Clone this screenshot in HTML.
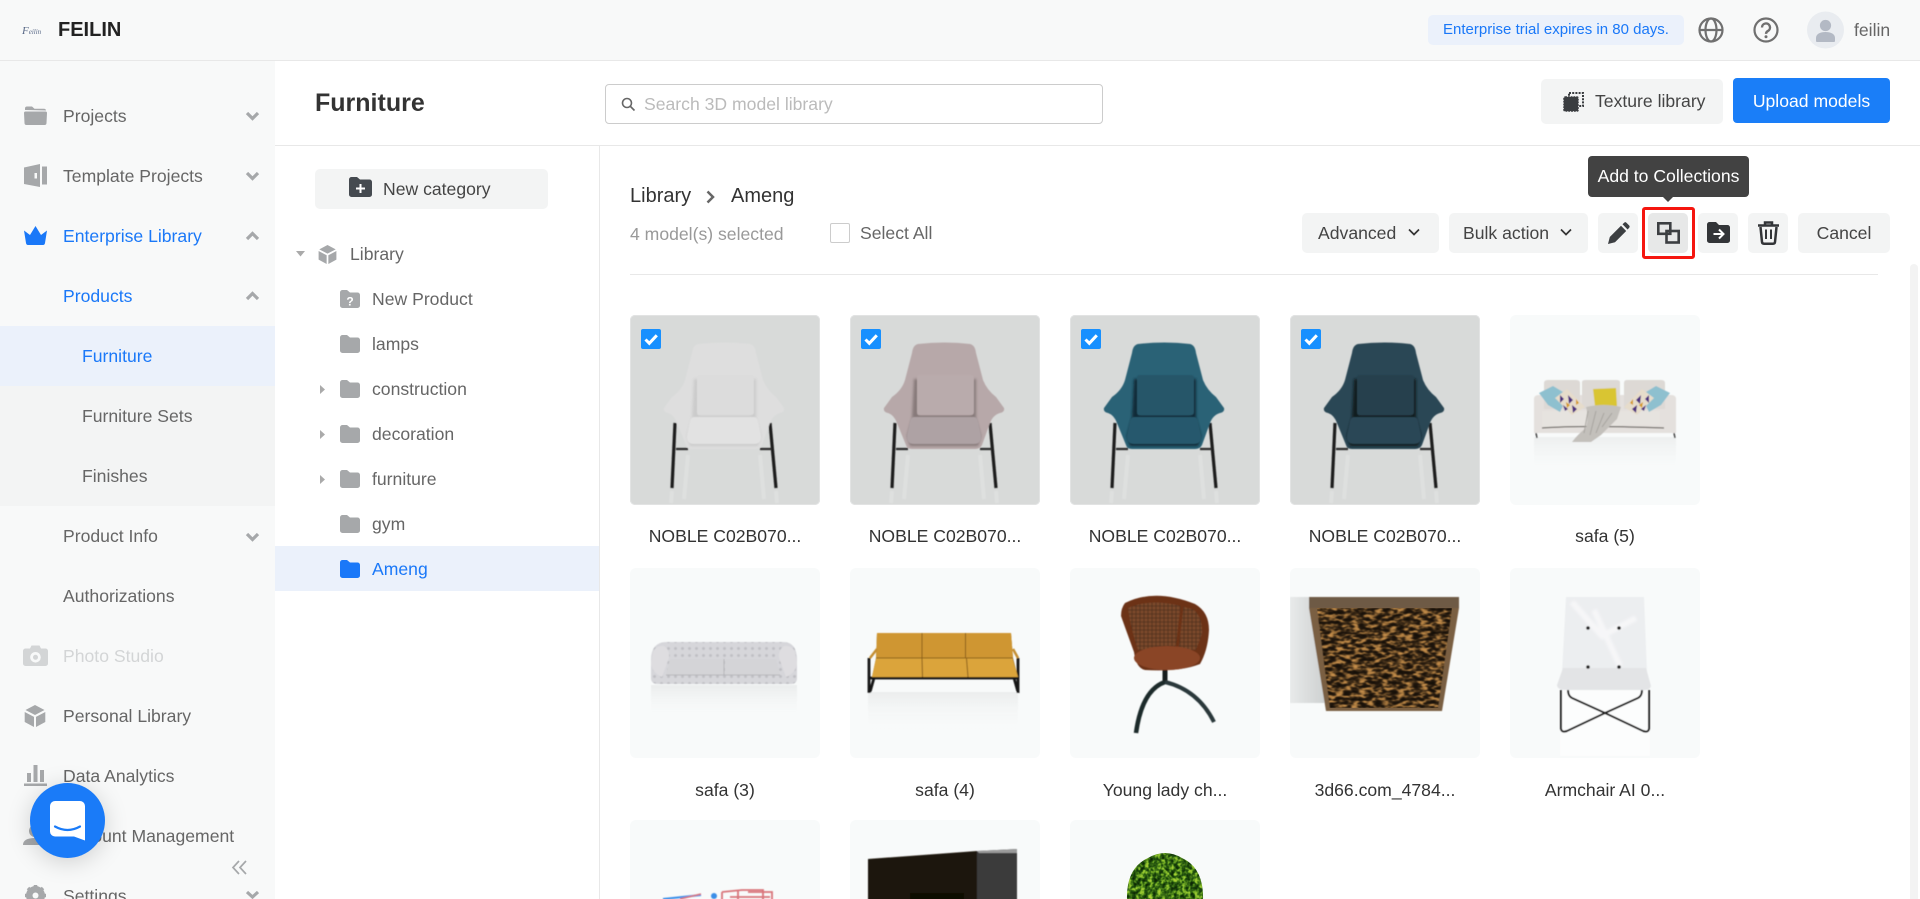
<!DOCTYPE html>
<html lang="en"><head><meta charset="utf-8"><title>Furniture</title>
<style>
*{box-sizing:border-box}
html,body{margin:0;padding:0;width:1920px;height:899px;overflow:hidden;background:#fff}
#root{position:relative;width:1920px;height:899px;overflow:hidden;background:#fff;font-family:"Liberation Sans",Arial,sans-serif;font-size:17.6px;color:#666}
.a{position:absolute}
.t{position:absolute;white-space:nowrap;line-height:30px;height:30px;margin-top:1px}
.blue{color:#1a78f8}
.btn{position:absolute;background:#f3f4f4;border-radius:5px}
.card{position:absolute;width:190px;height:190px;border-radius:6px;background:#f8fafa;overflow:hidden}
.card.sel{background:#d8dad9;border-radius:5px;box-shadow:inset 0 0 0 1px #e2e3e3}
.card svg{position:absolute;left:0;top:0}
.card.cut{height:79px;border-radius:6px 6px 0 0}
.card.cut svg{overflow:hidden}
.ck{position:absolute;left:11px;top:14px;width:20px;height:20px;border-radius:2px;background:#1890ff}
.ck svg{left:0;top:0}
.lb{position:absolute;width:190px;text-align:center;color:#333;line-height:24px;white-space:nowrap;margin-top:1px}
svg{display:block;overflow:visible}
</style></head><body>
<div id="root">
<svg width="0" height="0" style="position:absolute">
<defs>
<filter id="b"><feGaussianBlur stdDeviation=".45"/></filter>
<filter id="b1"><feGaussianBlur stdDeviation="1.200"/></filter>
<linearGradient id="fade" x1="0" y1="0" x2="0" y2="1"><stop offset="0" stop-color="#e6e8e8"/><stop offset="1" stop-color="#f8fafa" stop-opacity="0"/></linearGradient>
<linearGradient id="shd" x1="0" y1="0" x2="1" y2="0"><stop offset="0" stop-color="#e8eaea"/><stop offset="1" stop-color="#cdd0d0"/></linearGradient>
<filter id="wv" x="0" y="0" width="100%" height="100%" color-interpolation-filters="sRGB"><feTurbulence type="fractalNoise" baseFrequency=".13 .3" numOctaves="2" seed="7"/><feColorMatrix values="1 0 0 0 0 1 0 0 0 0 1 0 0 0 0 0 0 0 0 1"/><feComponentTransfer><feFuncR type="table" tableValues=".08 .08 .08 .1 .13 .24 .55 .72 .78 .8 .8"/><feFuncG type="table" tableValues=".06 .06 .06 .07 .09 .17 .39 .52 .56 .58 .58"/><feFuncB type="table" tableValues=".03 .03 .03 .04 .05 .09 .2 .27 .3 .3 .3"/></feComponentTransfer><feComposite in2="SourceGraphic" operator="in"/><feGaussianBlur stdDeviation=".4"/></filter>
<filter id="lf" x="0" y="0" width="100%" height="100%" color-interpolation-filters="sRGB"><feTurbulence type="fractalNoise" baseFrequency=".24" numOctaves="2" seed="4"/><feColorMatrix values="1 0 0 0 0 1 0 0 0 0 1 0 0 0 0 0 0 0 0 1"/><feComponentTransfer><feFuncR type="table" tableValues=".05 .05 .05 .08 .12 .22 .38 .55 .65 .7 .7"/><feFuncG type="table" tableValues=".15 .15 .15 .22 .3 .42 .6 .75 .8 .8 .8"/><feFuncB type="table" tableValues=".02 .02 .02 .03 .05 .08 .12 .18 .2 .2 .2"/></feComponentTransfer><feComposite in2="SourceGraphic" operator="in"/></filter>
<symbol id="fd" viewBox="0 0 20 18"><path d="M0 2.500A2.500 2.500 0 0 1 2.500 0H7l3 2.500h7.500A2.500 2.500 0 0 1 20 5v10.500a2.500 2.500 0 0 1-2.500 2.500h-15A2.500 2.500 0 0 1 0 15.500z"/></symbol>
<symbol id="cube" viewBox="0 0 22 22"><path d="M11 0l9.500 5L11 10 1.500 5zM.7 7l9.300 4.900V22L.7 17zM21.300 7L12 11.900V22l9.300-5z"/></symbol>
<symbol id="chair" viewBox="0 0 190 190">
<g filter="url(#b)">
<path d="M58 140l-4 44M130 140l4 44M42 176l-1 12M146 176l1 12" stroke="#fff" stroke-opacity=".16" stroke-width="4"/>
<path d="M45 108L42 173M140 108l6 65" stroke="#1c1c1c" stroke-width="3.200" fill="none"/>
<path d="M46 134l12 0M130 134l12 0" stroke="#2a2a2a" stroke-width="2.200"/>
<path d="M68 29Q95 26 120 29Q125 30 126 38L133 65Q137 75 146 82L154 93Q155 97 150 98Q143 100 140 108L132 130Q130 134 125 134H62Q57 134 56 130L47 108Q44 100 38 98Q33 97 34 93L42 82Q52 75 55 65L62 38Q63 30 68 29Z" style="fill:var(--b)"/>
</g>
<path d="M64 64h5v36h52V64h5V103l5 18-3 10H60l-3-10 5-18z" style="fill:var(--d)" opacity=".85" filter="url(#b1)"/>
<g filter="url(#b)">
<path d="M69 60H121Q124 60 124 63V97Q124 100 121 100H69Q67 100 67 97V63Q67 60 69 60Z" style="fill:var(--p)"/>
<path d="M64 102H124Q127 102 128 106L131 120Q132 129 124 129H64Q56 129 57 120L60 106Q61 102 64 102Z" style="fill:var(--s)"/>
</g>
</symbol>
<pattern id="tuft" width="7" height="7" patternUnits="userSpaceOnUse"><rect width="7" height="7" fill="#d6d6da"/><circle cx="3.500" cy="3.500" r="1.500" fill="#c0c0c5"/></pattern>
<pattern id="cane" width="4" height="4" patternUnits="userSpaceOnUse"><rect width="4" height="4" fill="#7a4a2c"/><path d="M0 2h4M2 0v4" stroke="#4e2f1c" stroke-width=".8"/></pattern>
</defs></svg>

<!-- sidebar -->
<div class="a" style="left:0;top:0;width:275px;height:899px;background:#f8f9f9"></div>
<div class="a" style="left:0;top:326px;width:275px;height:60px;background:#ebf1fb"></div>
<div class="a" style="left:0;top:386px;width:275px;height:120px;background:#f3f4f4"></div>

<!-- header -->
<div class="a" style="left:0;top:0;width:1920px;height:61px;background:#f8f9f9;border-bottom:1px solid #e8e8e8"></div>
<div class="t" style="left:22px;top:15px;font:italic 11px/30px 'Liberation Serif',serif;color:#5a6a88">F<span style="font-size:7px">eilin</span></div>
<div class="t" style="left:58px;top:14px;font-size:20px;font-weight:bold;color:#222">FEILIN</div>
<div class="a" style="left:1428px;top:15px;width:256px;height:30px;background:#ebf1fb;border-radius:5px;color:#1a78f8;font-size:15px;line-height:30px;text-align:center;white-space:nowrap">Enterprise trial expires in 80 days.</div>
<svg class="a" style="left:1699px;top:18px" width="24" height="24" viewBox="0 0 24 24" fill="none" stroke="#707070" stroke-width="2.200"><circle cx="12" cy="12" r="11.500"/><ellipse cx="12" cy="12" rx="5.500" ry="11.500"/><path d="M.5 12h23"/></svg>
<svg class="a" style="left:1754px;top:18px" width="24" height="24" viewBox="0 0 24 24" fill="none" stroke="#707070" stroke-width="2.200"><circle cx="12" cy="12" r="11.500"/><path d="M8 9.500a4 4 0 1 1 6 3.400c-1.400.8-2 1.500-2 3" stroke-width="2.400"/><circle cx="12" cy="18.800" r="1.500" fill="#707070" stroke="none"/></svg>
<svg class="a" style="left:1807px;top:11px" width="37" height="38" viewBox="0 0 37 38"><circle cx="18.500" cy="19" r="18.500" fill="#e9ecf0"/><circle cx="18.500" cy="14.500" r="5.600" fill="#b3b9c4"/><path d="M9 30v-3c0-4 4-6 9.500-6s9.500 2 9.500 6v3q0 1-1 1H10q-1 0-1-1z" fill="#b3b9c4"/></svg>
<div class="t" style="left:1854px;top:14px;color:#666">feilin</div>

<!-- sidebar items -->
<svg class="a" style="left:24px;top:106px" width="23" height="19" viewBox="0 0 23 19" fill="#a6a8aa"><path d="M1 4V2.500A2 2 0 0 1 3 .5h5l2.500 2.300H20a2 2 0 0 1 2 1.700z"/><path d="M1.500 5.500H21.500q1.500 0 1.500 1.500L22.500 17q0 2-2 2h-18q-2 0-2-2L0 7q0-1.500 1.500-1.500z"/></svg>
<div class="t" style="left:63px;top:100px">Projects</div>
<svg class="a" style="left:24px;top:164px" width="23" height="23" viewBox="0 0 23 23" fill="#a6a8aa"><path d="M0 3.500L16 0V23L0 20zM10.500 9v5.500h2.500V9zM18 2.500h5V20.500h-5z" fill-rule="evenodd"/></svg>
<div class="t" style="left:63px;top:160px">Template Projects</div>
<svg class="a" style="left:24px;top:226px" width="23" height="19" viewBox="0 0 23 19" fill="#1a78f8"><path d="M0 4.500L6 9 11.500 0 17 9l6-4.500L21 17q-.3 2-2 2H4q-1.700 0-2-2z"/></svg>
<div class="t blue" style="left:63px;top:220px">Enterprise Library</div>
<div class="t blue" style="left:63px;top:280px">Products</div>
<div class="t blue" style="left:82px;top:340px">Furniture</div>
<div class="t" style="left:82px;top:400px">Furniture Sets</div>
<div class="t" style="left:82px;top:460px">Finishes</div>
<div class="t" style="left:63px;top:520px">Product Info</div>
<div class="t" style="left:63px;top:580px">Authorizations</div>
<svg class="a" style="left:23px;top:645px" width="25" height="21" viewBox="0 0 25 21" fill="#d3d5d6"><path d="M2.500 3.500H7L8.500.5h8l1.500 3h4.500A2.500 2.500 0 0 1 25 6v12.500a2.500 2.500 0 0 1-2.500 2.500h-20A2.500 2.500 0 0 1 0 18.500V6a2.500 2.500 0 0 1 2.500-2.500zM12.500 7a5.300 5.300 0 1 0 0 10.600 5.300 5.300 0 0 0 0-10.600zm0 2.800a2.500 2.500 0 1 1 0 5 2.500 2.500 0 0 1 0-5z" fill-rule="evenodd"/></svg>
<div class="t" style="left:63px;top:640px;color:#d3d5d6">Photo Studio</div>
<svg class="a" style="left:24px;top:705px;fill:#a6a8aa" width="22" height="22"><use href="#cube"/></svg>
<div class="t" style="left:63px;top:700px">Personal Library</div>
<svg class="a" style="left:24px;top:765px" width="23" height="21" viewBox="0 0 23 21" fill="#a6a8aa"><rect x="3" y="8" width="4" height="9"/><rect x="9.500" y="0" width="4" height="17"/><rect x="16" y="5" width="4" height="12"/><rect x="0" y="18.500" width="23" height="2.500"/></svg>
<div class="t" style="left:63px;top:760px">Data Analytics</div>
<svg class="a" style="left:23px;top:825px" width="24" height="20" viewBox="0 0 24 20" fill="#a6a8aa"><circle cx="12" cy="6" r="6"/><path d="M0 20q0-7 12-7t12 7z"/></svg>
<div class="t" style="left:63px;top:820px">Account Management</div>
<div class="a" style="left:25px;top:885px;width:21px;height:14px;overflow:hidden"><svg width="21" height="21" viewBox="0 0 21 21"><circle cx="10.500" cy="10.500" r="7" fill="none" stroke="#a6a8aa" stroke-width="5"/><path d="M10.500 0v21M0 10.500h21M3 3l15 15M18 3L3 18" stroke="#a6a8aa" stroke-width="3.500"/><circle cx="10.500" cy="10.500" r="3" fill="#f8f9f9"/></svg></div>
<div class="t" style="left:63px;top:880px;height:18px;overflow:hidden">Settings</div>
<svg class="a" style="left:0;top:0" width="275" height="899" fill="none" stroke="#a6a8aa" stroke-width="3.200">
<path d="M247 113l5.500 5.500 5.500-5.500M247 173l5.500 5.500 5.500-5.500M247 239l5.500-5.500 5.500 5.500M247 299l5.500-5.500 5.500 5.500M247 534l5.500 5.500 5.500-5.500M247 892l5.500 5 5.500-5"/>
<path d="M239 861l-6 6.500 6 6.500M246 861l-6 6.500 6 6.500" stroke-width="1.700"/></svg>
<div class="a" style="left:30px;top:783px;width:75px;height:75px;border-radius:50%;background:#1a7bf8;box-shadow:0 4px 24px rgba(0,0,0,.17)"></div>
<svg class="a" style="left:50px;top:801px" width="35" height="40" viewBox="0 0 35 40"><path d="M5 0H30a5 5 0 0 1 5 5V39.500L24 35.500H5a5 5 0 0 1-5-5V5a5 5 0 0 1 5-5z" fill="#fff"/><path d="M5 25.500q12.500 7 25 0" fill="none" stroke="#1a7bf8" stroke-width="2.200" stroke-linecap="round"/></svg>

<!-- top bar main -->
<div class="a" style="left:275px;top:145px;width:1645px;height:1px;background:#e8e8e8"></div>
<div class="a" style="left:599px;top:146px;width:1px;height:753px;background:#e8e8e8"></div>
<div class="t" style="left:315px;top:87px;font-size:25px;font-weight:bold;color:#333">Furniture</div>
<div class="a" style="left:605px;top:84px;width:498px;height:40px;border:1px solid #ccc;border-radius:4px"></div>
<svg class="a" style="left:621px;top:97px" width="15" height="15" viewBox="0 0 15 15" fill="none" stroke="#666" stroke-width="1.600"><circle cx="6" cy="6" r="4.500"/><path d="M9.500 9.500l4 4"/></svg>
<div class="t" style="left:644px;top:88px;color:#bbb">Search 3D model library</div>
<div class="btn" style="left:1541px;top:79px;width:182px;height:45px"></div>
<svg class="a" style="left:1563px;top:92px" width="21" height="20" viewBox="0 0 21 20"><rect x="6" y="1" width="14" height="13" fill="none" stroke="#3a3d40" stroke-width="2" stroke-dasharray="2 1.200"/><rect x="1" y="5" width="14" height="14" rx="1" fill="#3a3d40" stroke="#3a3d40" stroke-width="1.500" stroke-dasharray="2 .8"/></svg>
<div class="t" style="left:1595px;top:85px;color:#444">Texture library</div>
<div class="a" style="left:1733px;top:78px;width:157px;height:45px;background:#1a7ef8;border-radius:4px;color:#fff;line-height:46px;text-align:center;white-space:nowrap">Upload models</div>

<!-- tree -->
<div class="btn" style="left:315px;top:169px;width:233px;height:40px"></div>
<svg class="a" style="left:349px;top:177px" width="23" height="20" viewBox="0 0 23 20"><path d="M0 2.500A2.500 2.500 0 0 1 2.500 0H8l3 2.500h9.500A2.500 2.500 0 0 1 23 5v12.500a2.500 2.500 0 0 1-2.500 2.500h-18A2.500 2.500 0 0 1 0 17.500z" fill="#454a50"/><path d="M11.500 7v9M7 11.500h9" stroke="#fff" stroke-width="2"/></svg>
<div class="t" style="left:383px;top:173px;color:#444">New category</div>
<svg class="a" style="left:296px;top:251px" width="9" height="6"><path d="M0 0h9L4.500 5.500z" fill="#aaa"/></svg>
<svg class="a" style="left:318px;top:245px;fill:#a6a8aa" width="19" height="19"><use href="#cube"/></svg>
<div class="t" style="left:350px;top:238px">Library</div>
<svg class="a" style="left:340px;top:290px" width="20" height="18" viewBox="0 0 20 18"><path d="M0 2.500A2.500 2.500 0 0 1 2.500 0H7l3 2.500h7.500A2.500 2.500 0 0 1 20 5v10.500a2.500 2.500 0 0 1-2.500 2.500h-15A2.500 2.500 0 0 1 0 15.500z" fill="#a6a8aa"/><text x="10" y="15.500" text-anchor="middle" fill="#fff" font-size="12" font-weight="bold" font-family="Liberation Sans">?</text></svg>
<div class="t" style="left:372px;top:283px">New Product</div>
<svg class="a" style="left:340px;top:335px;fill:#a6a8aa" width="20" height="18"><use href="#fd"/></svg>
<div class="t" style="left:372px;top:328px">lamps</div>
<svg class="a" style="left:320px;top:385px" width="5" height="9"><path d="M0 0l5 4.500L0 9z" fill="#aaa"/></svg>
<svg class="a" style="left:340px;top:380px;fill:#a6a8aa" width="20" height="18"><use href="#fd"/></svg>
<div class="t" style="left:372px;top:373px">construction</div>
<svg class="a" style="left:320px;top:430px" width="5" height="9"><path d="M0 0l5 4.500L0 9z" fill="#aaa"/></svg>
<svg class="a" style="left:340px;top:425px;fill:#a6a8aa" width="20" height="18"><use href="#fd"/></svg>
<div class="t" style="left:372px;top:418px">decoration</div>
<svg class="a" style="left:320px;top:475px" width="5" height="9"><path d="M0 0l5 4.500L0 9z" fill="#aaa"/></svg>
<svg class="a" style="left:340px;top:470px;fill:#a6a8aa" width="20" height="18"><use href="#fd"/></svg>
<div class="t" style="left:372px;top:463px">furniture</div>
<svg class="a" style="left:340px;top:515px;fill:#a6a8aa" width="20" height="18"><use href="#fd"/></svg>
<div class="t" style="left:372px;top:508px">gym</div>
<div class="a" style="left:275px;top:546px;width:324px;height:45px;background:#ebf1fb"></div>
<svg class="a" style="left:340px;top:560px;fill:#1a78f8" width="20" height="18"><use href="#fd"/></svg>
<div class="t blue" style="left:372px;top:553px">Ameng</div>

<!-- content head -->
<div class="t" style="left:630px;top:180px;font-size:20px;color:#333">Library</div>
<svg class="a" style="left:706px;top:190px" width="10" height="14" fill="none" stroke="#666" stroke-width="2.500"><path d="M1.500 1.500L7 7l-5.500 5.500"/></svg>
<div class="t" style="left:731px;top:180px;font-size:20px;color:#333">Ameng</div>
<div class="t" style="left:630px;top:218px;color:#999">4 model(s) selected</div>
<div class="a" style="left:830px;top:223px;width:20px;height:20px;border:1px solid #ccc;border-radius:2px;background:#fff"></div>
<div class="t" style="left:860px;top:217px;color:#666">Select All</div>

<div class="btn" style="left:1302px;top:213px;width:137px;height:40px"></div>
<div class="t" style="left:1318px;top:217px;color:#444">Advanced</div>
<div class="btn" style="left:1449px;top:213px;width:139px;height:40px"></div>
<div class="t" style="left:1463px;top:217px;color:#444">Bulk action</div>
<svg class="a" style="left:1400px;top:225px" width="180" height="15" fill="none" stroke="#333" stroke-width="1.700"><path d="M9 4.500l5 5 5-5M161 4.500l5 5 5-5"/></svg>
<div class="btn" style="left:1598px;top:213px;width:40px;height:40px"></div>
<svg class="a" style="left:1608px;top:222px" width="22" height="22" viewBox="0 0 22 22" fill="#3c3f42"><path d="M0 22l1.800-7L13 3.800 18.200 9 7 20.200zM14.500 2.300L16.300.6q1-.9 2 0l3 3q.9 1 0 2L19.600 7.500z"/></svg>
<div class="btn" style="left:1648px;top:213px;width:40px;height:40px;background:#e7e8e8"></div>
<svg class="a" style="left:1657px;top:222px" width="23" height="22" viewBox="0 0 23 22" fill="none" stroke="#3c3f42" stroke-width="2.600"><rect x="1.300" y="1.300" width="12" height="10.500"/><rect x="9.500" y="9" width="12.200" height="11.500"/></svg>
<div class="a" style="left:1642px;top:207px;width:53px;height:52px;border:3px solid #f5160f;border-radius:3px"></div>
<div class="btn" style="left:1698px;top:213px;width:40px;height:40px"></div>
<svg class="a" style="left:1707px;top:222px" width="23" height="21" viewBox="0 0 23 21"><path d="M0 2.500A2.500 2.500 0 0 1 2.500 0H9l3 3h8.500A2.500 2.500 0 0 1 23 5.500v13a2.500 2.500 0 0 1-2.500 2.500h-18A2.500 2.500 0 0 1 0 18.500z" fill="#333538"/><path d="M6.500 12h10M12 7.500l4.500 4.500-4.500 4.500" fill="none" stroke="#fff" stroke-width="2"/></svg>
<div class="btn" style="left:1748px;top:213px;width:40px;height:40px"></div>
<svg class="a" style="left:1758px;top:221px" width="21" height="24" viewBox="0 0 21 24" fill="none" stroke="#333538" stroke-width="2.500"><path d="M0 4.500h21" stroke-width="2.600"/><path d="M7 4V1.500h7V4"/><path d="M2.500 6L4 21q.2 1.700 2 1.700h9q1.800 0 2-1.700L18.500 6"/><path d="M8 8.500v9.500M13 8.500v9.500" stroke-width="2"/></svg>
<div class="btn" style="left:1798px;top:213px;width:92px;height:40px;line-height:40px;text-align:center;color:#444">Cancel</div>
<div class="a" style="left:630px;top:274px;width:1248px;height:1px;background:#e8e8e8"></div>
<div class="a" style="left:1910px;top:264px;width:8px;height:635px;background:#f3f3f3;border-radius:4px 4px 0 0"></div>

<div class="a" style="left:1588px;top:156px;width:161px;height:41px;background:#424242;border-radius:4px;color:#fff;line-height:41px;text-align:center;white-space:nowrap">Add to Collections</div>
<div class="a" style="left:1663px;top:197px;width:0;height:0;border:5px solid transparent;border-top:5px solid #424242;border-bottom:0"></div>

<!-- cards row 1 -->
<div class="card sel" style="left:630px;top:315px;--b:#dedede;--w:#e0e0e0;--d:#c8c8c8;--p:#dcdcdc;--s:#e2e2e2"><svg width="190" height="190"><use href="#chair"/></svg><div class="ck"><svg width="20" height="20" viewBox="0 0 20 20"><path d="M4.500 10.500l3.800 3.800 7.500-8" fill="none" stroke="#fff" stroke-width="3"/></svg></div></div>
<div class="card sel" style="left:850px;top:315px;--b:#b7a8a9;--w:#bba9a9;--d:#7f7272;--p:#b9abac;--s:#aea2a4"><svg width="190" height="190"><use href="#chair"/></svg><div class="ck"><svg width="20" height="20" viewBox="0 0 20 20"><path d="M4.500 10.500l3.800 3.800 7.500-8" fill="none" stroke="#fff" stroke-width="3"/></svg></div></div>
<div class="card sel" style="left:1070px;top:315px;--b:#2c6276;--w:#2a5d72;--d:#0e242e;--p:#265669;--s:#27596d"><svg width="190" height="190"><use href="#chair"/></svg><div class="ck"><svg width="20" height="20" viewBox="0 0 20 20"><path d="M4.500 10.500l3.800 3.800 7.500-8" fill="none" stroke="#fff" stroke-width="3"/></svg></div></div>
<div class="card sel" style="left:1290px;top:315px;--b:#2b4654;--w:#2d4855;--d:#0a1419;--p:#263f4d;--s:#2c4656"><svg width="190" height="190"><use href="#chair"/></svg><div class="ck"><svg width="20" height="20" viewBox="0 0 20 20"><path d="M4.500 10.500l3.800 3.800 7.500-8" fill="none" stroke="#fff" stroke-width="3"/></svg></div></div>
<div class="card" style="left:1510px;top:315px"><svg width="190" height="190"><g filter="url(#b)">
<rect x="24" y="122" width="142" height="38" fill="url(#fade)" opacity=".6"/>
<path d="M26 118l1 5M164 118l1 5" stroke="#444" stroke-width="1.500"/>
<path d="M24 84q0-4 5-4h132q5 0 5 4v34H24z" fill="#e4e0dd"/>
<path d="M34 68q0-3 4-3h28q4 0 4 3v26H34zM72 67q0-2 4-2h30q4 0 4 2v27H72zM114 68q0-3 3-3h34q4 0 4 3v26h-41z" fill="#ddd9d5"/>
<path d="M32 96h38q2 0 2 3v14H32zM70 96h42v15H70zM112 96h38v14h-38z" fill="#e6e3df"/>
<path d="M32 113q40-3 122 0" stroke="#6e6a66" stroke-width="1.200" fill="none"/>
<path d="M83 74l23-1 1 18H85z" fill="#d9c533"/>
<path d="M29 78l14-7 15 9-8 17-12-7z" fill="#8ec0cf"/>
<path d="M45 83l12-9 18 18-13 8z" fill="#e6dccb"/><path d="M50 80l4 4-4 4zM58 80l5 5-4 4zM62 90l5 4-4 4zM53 90l5 4-3 2z" fill="#4c2e7e"/><path d="M56 87l4 3-3 3zM66 84l3 4-3 2z" fill="#d49a24"/>
<path d="M160 78l-14-7-15 9 8 17 12-7z" fill="#8ec0cf"/>
<path d="M144 83l-12-9-18 18 13 8z" fill="#e6dccb"/><path d="M139 80l-4 4 4 4zM131 80l-5 5 4 4zM127 90l-5 4 4 4zM136 90l-5 4 3 2z" fill="#4c2e7e"/><path d="M133 87l-4 3 3 3zM123 84l-3 4 3 2z" fill="#d49a24"/>
<path d="M76 92q18-4 35 0l-4 12-16 16-10 7-19 0q6-8 14-14 3-12 0-21z" fill="#c3c0bb"/>
<path d="M78 96l-4 22M86 96l-6 24M94 98l-8 20M102 98l-10 14" stroke="#a7a49f" stroke-width="1" fill="none"/>
</g></svg></div>
<div class="lb" style="left:630px;top:523px">NOBLE C02B070...</div>
<div class="lb" style="left:850px;top:523px">NOBLE C02B070...</div>
<div class="lb" style="left:1070px;top:523px">NOBLE C02B070...</div>
<div class="lb" style="left:1290px;top:523px">NOBLE C02B070...</div>
<div class="lb" style="left:1510px;top:523px">safa (5)</div>

<!-- row 2 -->
<div class="card" style="left:630px;top:568px"><svg width="190" height="190"><g filter="url(#b)">
<rect x="21" y="117" width="146" height="34" fill="url(#fade)" opacity=".75"/>
<path d="M21 92q0-18 16-18h116q14 0 14 18v18q0 6-6 6H28q-7 0-7-6z" fill="url(#tuft)"/>
<path d="M23 84q3-7 11-6 6 4 5 12l-7 19q-10-4-11-14z" fill="#dedde0"/>
<path d="M165 84q-3-7-11-6-6 4-5 12l7 19q10-4 11-14z" fill="#dedde0"/>
<path d="M40 91H94V107H36zM95 91H146L150 107H95z" fill="#d4d4d7"/>
<path d="M94 91v16M36 107H150" stroke="#aeaeb2" stroke-width=".8"/>
</g></svg></div>
<div class="card" style="left:850px;top:568px"><svg width="190" height="190"><g filter="url(#b)">
<rect x="18" y="124" width="150" height="40" fill="url(#fade)" opacity=".7"/>
<path d="M19 90v35M168 90v35M19 110H168M24 110l-4 14M164 110l4 14" stroke="#141414" stroke-width="2.800" fill="none"/>
<path d="M27 65H161L163 90 168 109H22L26 90z" fill="#8a5f1c"/>
<path d="M27 65H71.500V89.500H26zM72.500 65H115V89.500H72.500zM116 65H161L163 89.500H116z" fill="#cf9632"/>
<path d="M26 90.500H71.500L72 109H22zM72.500 90.500H116L117.500 109H73zM117 90.500H162.500L168 109H118.500z" fill="#dba43b"/>
<path d="M20 90l7-9M168 90l-5-9" stroke="#c48e30" stroke-width="2.500"/>
</g></svg></div>
<div class="card" style="left:1070px;top:568px"><svg width="190" height="190"><g filter="url(#b)">
<path d="M95 100v15" stroke="#161a1a" stroke-width="5"/>
<path d="M95 114Q72 122 66 165" stroke="#1e2a2a" stroke-width="4.500" fill="none"/>
<path d="M95 114Q128 122 144 154" stroke="#29393a" stroke-width="4" fill="none"/>
<path d="M55 35Q85 20 125 36 139 44 139 62 138 82 130 96 110 104 75 102 66 100 64 84 56 62 51 48 51 40 55 35z" fill="#6c3118"/>
<path d="M58 40Q85 28 124 42 133 50 132 66L126 82H68Q60 58 58 40z" fill="url(#cane)"/>
<path d="M112 38l-5 44" stroke="#6c3118" stroke-width="3"/>
<ellipse cx="97" cy="90" rx="33" ry="12" fill="#8a4526"/>
</g></svg></div>
<div class="card" style="left:1290px;top:568px"><svg width="190" height="190"><g filter="url(#b)">
<rect x="0" y="29" width="36" height="106" fill="url(#shd)"/>
<path d="M19 29H169V40L152 143H36L19 40z" fill="#7a5f42"/>
<path d="M19 29H169V40H19z" fill="#6e5a45"/>
</g>
<path d="M27 40H162L148 140H40z" fill="#000" filter="url(#wv)"/></svg></div>
<div class="card" style="left:1510px;top:568px"><svg width="190" height="190"><g filter="url(#b)">
<rect x="50" y="122" width="90" height="66" fill="#fff" opacity=".55"/>
<path d="M51 122V160Q51 165 57 163L95 145L128 130Q132 128 132 122M139 122V160Q139 165 133 163L95 145L62 130Q58 128 58 122" fill="none" stroke="#1c1c1c" stroke-width="2"/>
<path d="M56 29H134L137 105H52z" fill="#eceef0"/>
<path d="M62 34L92 68l34-18M84 42l26 56" stroke="#f6f6f8" stroke-width="6" fill="none" filter="url(#b1)"/>
<path d="M53 100H136L141 118Q140 123 130 122H57Q47 122 47 117z" fill="#e3e4e6"/>
<circle cx="78" cy="60" r="1.800" fill="#222"/><circle cx="109" cy="60" r="1.800" fill="#222"/><circle cx="78" cy="99" r="1.800" fill="#222"/><circle cx="109" cy="99" r="1.800" fill="#222"/>
</g></svg></div>
<div class="lb" style="left:630px;top:777px">safa (3)</div>
<div class="lb" style="left:850px;top:777px">safa (4)</div>
<div class="lb" style="left:1070px;top:777px">Young lady ch...</div>
<div class="lb" style="left:1290px;top:777px">3d66.com_4784...</div>
<div class="lb" style="left:1510px;top:777px">Armchair AI 0...</div>

<!-- row 3 -->
<div class="card cut" style="left:630px;top:820px"><svg width="190" height="79"><g filter="url(#b)">
<path d="M33 79q20-2 38-4" stroke="#3b8ee8" stroke-width="2" fill="none"/>
<path d="M50 79l21-5" stroke="#d9747a" stroke-width="1.500" fill="none"/>
<circle cx="84" cy="76" r="3" fill="#3b8ee8"/>
<path d="M92 72l20-2 21 0v14M92 72V84M108 70V84M118 72h24v12M100 77h40" fill="none" stroke="#d9747a" stroke-width="1.800"/>
</g></svg></div>
<div class="card cut" style="left:850px;top:820px"><svg width="190" height="79"><g filter="url(#b)">
<path d="M18 39L127 31V100H18z" fill="#1f1308"/>
<path d="M127 31l40-2V100H127z" fill="#3a3a3a"/>
<path d="M127 31l40-2v4h-38z" fill="#9a9a9a"/>
<rect x="60" y="73" width="54" height="20" fill="#0b0705"/>
</g></svg></div>
<div class="card cut" style="left:1070px;top:820px"><svg width="190" height="79">
<path d="M57 80Q56 48 78 38 95 28 112 38 134 48 133 80z" fill="#000" filter="url(#lf)"/>
</svg></div>
</div>
</body></html>
